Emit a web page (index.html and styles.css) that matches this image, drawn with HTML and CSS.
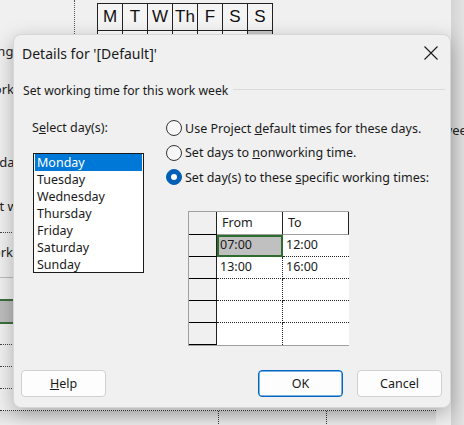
FILE: index.html
```html
<!DOCTYPE html>
<html>
<head>
<meta charset="utf-8">
<link rel="stylesheet" href="styles.css">
</head>
<body>
<div class="screen">
  <div class="backdrop">
    <div class="vdots"></div>
    <table class="cal">
      <tr><th>M</th><th>T</th><th>W</th><th>Th</th><th>F</th><th>S</th><th>S</th></tr>
      <tr><td></td><td></td><td></td><td></td><td></td><td></td><td class="wk"></td></tr>
    </table>
    <div class="leftpane">
      <div class="lp-text t1">Working</div>
      <div class="lp-text t2">Working</div>
      <div class="lp-text t3">Calendar</div>
      <div class="lp-text t4">Set work</div>
      <div class="lp-dots d1"></div>
      <div class="lp-text t5">Work</div>
      <div class="lp-line l1"></div>
      <div class="lp-bar"></div>
      <div class="lp-dots d2"></div>
      <div class="lp-dots d3"></div>
      <div class="lp-dots d4"></div>
    </div>
    <div class="rightpane"><span class="wee">week</span></div>
    <div class="bottomline"></div>
  </div>

  <div class="dialog">
    <div class="titlebar">
      <span class="title">Details for '[Default]'</span>
      <svg class="close" width="14" height="14" viewBox="0 0 14 14"><path d="M0.5 0.5L13.5 13.5M13.5 0.5L0.5 13.5" stroke="#1a1a1a" stroke-width="1.1" fill="none"/></svg>
    </div>
    <div class="section">
      <span>Set working time for this work week</span>
      <div class="rule"></div>
    </div>
    <div class="body">
      <div class="left">
        <div class="label">S<u>e</u>lect day(s):</div>
        <div class="listbox">
          <div class="item sel">Monday</div>
          <div class="item">Tuesday</div>
          <div class="item">Wednesday</div>
          <div class="item">Thursday</div>
          <div class="item">Friday</div>
          <div class="item">Saturday</div>
          <div class="item">Sunday</div>
        </div>
      </div>
      <div class="right">
        <div class="radio"><span class="circle"></span><span>Use Project <u>d</u>efault times for these days.</span></div>
        <div class="radio"><span class="circle"></span><span>Set days to <u>n</u>onworking time.</span></div>
        <div class="radio"><span class="circle on"></span><span>Set day(s) to these <u>s</u>pecific working times:</span></div>
        <div class="grid">
          <div class="rh"></div><div class="ch">From</div><div class="ch">To</div>
          <div class="rh"></div><div class="cell c1 active">07:00</div><div class="cell c2">12:00</div>
          <div class="rh"></div><div class="cell c1">13:00</div><div class="cell c2">16:00</div>
          <div class="rh"></div><div class="cell c1"></div><div class="cell c2"></div>
          <div class="rh"></div><div class="cell c1"></div><div class="cell c2"></div>
          <div class="rh"></div><div class="cell c1 bottom"></div><div class="cell c2 bottom"></div>
        </div>
      </div>
    </div>
    <div class="footer">
      <button class="btn"><u>H</u>elp</button>
      <div class="spacer"></div>
      <button class="btn ok">OK</button>
      <button class="btn">Cancel</button>
    </div>
  </div>
</div>
</body>
</html>
```

FILE: styles.css
```css
* { box-sizing: border-box; }
html, body { margin: 0; padding: 0; }
body {
  width: 464px;
  height: 425px;
  overflow: hidden;
  background: #f0f0f0;
  font-family: "Noto Sans", "Liberation Sans", sans-serif;
  color: #1a1a1a;
}
.screen { position: relative; width: 464px; height: 425px; overflow: hidden; }

/* background application */
.backdrop { position: absolute; inset: 0; }
.vdots {
  position: absolute; left: 74px; top: 0; height: 40px;
  border-left: 1px dotted #555;
}
.cal {
  position: absolute; left: 97px; top: 3px;
  border-collapse: collapse;
  font-family: "Liberation Sans", Arial, sans-serif;
}
.cal th, .cal td {
  width: 25px; border: 1px solid #222;
  text-align: center; padding: 0;
  font-size: 17px; font-weight: normal; color: #111;
}
.cal th { height: 27px; background: #f4f4f4; }
.cal td { height: 20px; background: #fff; }
.cal td.wk { background: #c8c8c8; }

.leftpane { position: absolute; left: 0; top: 0; width: 14px; height: 425px; overflow: hidden; }
.lp-text {
  position: absolute; font-size: 13px; white-space: nowrap; color: #222;
}
.t1 { top: 42px; left: -38px; }
.t2 { top: 80px; left: -18px; }
.t3 { top: 153px; left: -35px; }
.t4 { top: 197px; left: -15px; }
.t5 { top: 243px; left: -19px; }
.lp-dots { position: absolute; left: 0; width: 40px; border-top: 1px dotted #444; }
.d1 { top: 232px; }
.d2 { top: 344px; }
.d3 { top: 366px; }
.d4 { top: 388px; }
.lp-line { position: absolute; left: 0; width: 40px; top: 277px; border-top: 1px solid #bbb; }
.lp-bar {
  position: absolute; left: 0; width: 40px; top: 299px; height: 25px;
  background: #bdbdbd; border-top: 2px solid #3d6e3d; border-bottom: 2px solid #3d6e3d;
}
.rightpane {
  position: absolute; left: 451px; top: 0; width: 13px; height: 425px;
  background: linear-gradient(to right, #d4d4d4, #e2e2e2);
  overflow: visible;
}
.wee { position: absolute; left: -9px; top: 121px; font-size: 13px; color: #222; }
.bottomline {
  position: absolute; left: 0; top: 410px; width: 436px; height: 15px;
  border-top: 1px dotted #333;
  background: linear-gradient(#d8d8d8, #ececec);
}
.bottomline::before {
  content: ""; position: absolute; left: 218px; top: 0; height: 15px; border-left: 1px dotted #333;
}
.bottomline::after {
  content: ""; position: absolute; left: 326px; top: 0; height: 15px; border-left: 1px dotted #333;
}

/* dialog */
.dialog {
  position: absolute; left: 13px; top: 34px; width: 438px; height: 374px;
  background: #f0f0f0;
  border: 1px solid #d6d6d6;
  border-radius: 8px;
  box-shadow: 0 6px 20px rgba(0,0,0,0.28);
  display: flex; flex-direction: column;
}
.titlebar {
  height: 36px; display: flex; align-items: center; justify-content: space-between;
  padding: 0 12px 0 8px;
}
.title { font-size: 14px; color: #1a1a1a; }
.close { display: block; }
.section {
  display: flex; align-items: center; gap: 5px;
  padding: 0 5px 0 9px; margin-top: 11px; font-size: 12.2px; height: 17px;
}
.section .rule { flex: 1; border-top: 1px solid #dadada; margin-top: -3px; }
.body { display: flex; padding: 19px 0 0 17px; flex: 1; }
.left { width: 135px; }
.label { font-size: 12.5px; padding-left: 1px; height: 20px; line-height: 20px; }
.listbox {
  margin: 15px 0 0 2px; width: 111px; height: 120px;
  background: #fff; border: 1px solid #1a1a1a; padding: 0 1px;
}
.item { height: 17px; line-height: 17px; font-size: 12.5px; padding-left: 2px; color: #1a1a1a; }
.item.sel { background: #0078d7; color: #fff; }
.radio {
  display: flex; align-items: center; gap: 3px; height: 20px; margin-bottom: 4.5px;
  font-size: 12.5px;
}
.circle {
  width: 16px; height: 16px; border-radius: 50%;
  border: 1px solid #333; background: #f7f7f7; flex: none;
}
.circle.on { background: #005fb8; border-color: #005fb8; position: relative; }
.circle.on::after {
  content: ""; position: absolute; left: 4px; top: 4px; width: 6px; height: 6px;
  border-radius: 50%; background: #fff;
}
.grid {
  margin: 24px 0 0 22px;
  display: grid; grid-template-columns: 28px 66px 66px;
  grid-template-rows: 23px repeat(5, 22px);
  width: 161px;
  border: 1px solid #a0a0a0;
  font-size: 12.5px;
}
.rh { background: #f0f0f0; border-bottom: 1px solid #000; border-right: 1px solid #222; }
.ch {
  background: #fff; padding-left: 5px; line-height: 22px;
  border-right: 1px solid #222; border-bottom: 1px solid #a0a0a0;
}
.cell { background: #fff; padding-left: 3px; line-height: 20px; border-bottom: 1px dotted #222; }
.cell.c1 { border-right: 1px dotted #222; }
.cell.bottom { border-bottom: none; }
.cell.active { background: #c0c0c0; outline: 2px solid #2d6b2f; outline-offset: -2px; }
.footer { display: flex; align-items: center; gap: 14px; padding: 0 8px 10px 7px; }
.spacer { flex: 1; }
.btn {
  width: 85px; height: 27px; background: #fdfdfd;
  border: 1px solid #d0d0d0; border-radius: 4px;
  font-family: inherit; font-size: 12.5px; color: #1a1a1a; padding: 0;
}
.btn.ok { border-color: #0067c0; box-shadow: inset 0 0 0 0.5px #0067c0; }
```
